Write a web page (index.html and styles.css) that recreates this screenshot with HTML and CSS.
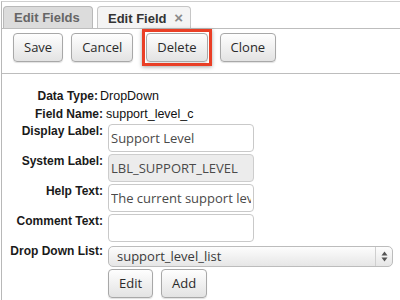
FILE: index.html
```html
<!DOCTYPE html>
<html>
<head>
<meta charset="utf-8">
<link rel="stylesheet" href="styles.css">
</head>
<body>
<div class="page">
  <div class="tabs">
    <div class="tab">Edit Fields</div>
    <div class="tab active">Edit Field <span class="close">×</span></div>
  </div>
  <div class="toolbar">
    <button class="btn">Save</button>
    <button class="btn">Cancel</button>
    <span class="hl"><button class="btn">Delete</button></span>
    <button class="btn">Clone</button>
  </div>
  <div class="form">
    <div class="row text dt"><div class="lbl">Data Type:</div><div class="val">DropDown</div></div>
    <div class="row text fn"><div class="lbl">Field Name:</div><div class="val">support_level_c</div></div>
    <div class="row inp first"><div class="lbl">Display Label:</div><input class="field" type="text" value="Support Level"></div>
    <div class="row inp"><div class="lbl">System Label:</div><input class="field ro" type="text" value="LBL_SUPPORT_LEVEL" readonly></div>
    <div class="row inp"><div class="lbl">Help Text:</div><input class="field" type="text" value="The current support level"></div>
    <div class="row inp"><div class="lbl">Comment Text:</div><input class="field" type="text" value=""></div>
    <div class="row sel"><div class="lbl">Drop Down List:</div>
      <div class="select"><span class="txt">support_level_list</span><span class="arrow"><svg width="7" height="11" viewBox="0 0 7 11"><path d="M3.5 0.5 L6.5 4.5 L0.5 4.5 Z M0.5 6.5 L6.5 6.5 L3.5 10.5 Z" fill="#555"/></svg></span></div>
    </div>
    <div class="row acts"><div></div><div class="btns"><button class="btn">Edit</button><button class="btn">Add</button></div></div>
  </div>
</div>
</body>
</html>
```
FILE: styles.css
```css
html, body {
  margin: 0;
  padding: 0;
  background: #fff;
  width: 400px;
  height: 300px;
  overflow: hidden;
}
.page {
  margin: 1px 0 0 1px;
  border-top: 1px solid #cfcfcf;
  border-left: 1px solid #b8b8b8;
  height: 298px;
  overflow: hidden;
}
.tabs {
  display: flex;
  align-items: flex-end;
  gap: 4px;
  padding: 4px 0 0 1px;
  height: 22px;
  border-bottom: 1px solid #bdbdbd;
}
.tab {
  box-sizing: border-box;
  height: 22px;
  width: 90px;
  padding-left: 10px;
  border: 1px solid #b9b9b9;
  border-bottom: none;
  border-radius: 4px 4px 0 0;
  background: #dcdcdc;
  font: bold 13px/21px "Liberation Sans", Arial, sans-serif;
  color: #666;
  white-space: nowrap;
}
.tab.active {
  width: 94px;
  background: #f4f4f4;
  border-color: #c6c6c6;
  color: #333;
}
.close {
  color: #8a8a8a;
  font-size: 15px;
  margin-left: 4px;
}
.toolbar {
  display: flex;
  align-items: flex-start;
  gap: 8px;
  height: 40px;
  padding: 4px 0 0 11px;
  border-bottom: 1px solid #bdbdbd;
}
.btn {
  box-sizing: border-box;
  height: 29px;
  margin: 0;
  padding: 0 10px;
  border: 1px solid #a8a8a8;
  border-radius: 4px;
  background: linear-gradient(#fefefe, #e3e3e3);
  box-shadow: 0 1px 1px rgba(0,0,0,0.12);
  font: 13px/27px "Open Sans", sans-serif;
  color: #2a2a2a;
}
.hl {
  display: flex;
  margin: -4px 0 -4px 1px;
  padding: 1px 1px 1px 1px;
  border: 3px solid #ea3f26;
  box-shadow: 0 1px 4px rgba(0,0,0,0.35);
}
.form {
  padding-top: 14px;
}
.row {
  display: grid;
  grid-template-columns: 101px 1fr;
  column-gap: 3px;
  align-items: start;
}
.lbl {
  text-align: right;
  font: bold 12px/14px "Liberation Sans", Arial, sans-serif;
  color: #1a1a1a;
  white-space: nowrap;
}
.row.text .lbl { line-height: 17px; }
.val {
  font: 12.5px/17px "Liberation Sans", Arial, sans-serif;
  color: #111;
  white-space: nowrap;
}
.row.dt .lbl { padding-right: 5px; }
.row.dt .val { margin-left: -6px; }
.row.fn { margin-top: 1px; }
.row.inp { margin-top: 2px; }
.row.inp.first { margin-top: 1px; }
.field {
  box-sizing: border-box;
  width: 146px;
  height: 28px;
  margin: 0 0 0 2px;
  padding: 0 2px;
  border: 1px solid #c9c9c9;
  border-radius: 4px;
  background: #fff;
  font: 13px "Open Sans", sans-serif;
  color: #4a4a4a;
  outline: none;
}
.field.ro {
  background: #ececec;
  border-color: #cdcdcd;
}
.row.sel { margin-top: 4px; }
.row.sel .lbl { line-height: 10px; }
.select {
  box-sizing: border-box;
  display: flex;
  width: 285px;
  height: 21px;
  margin-left: 2px;
  border: 1px solid #bcbcbc;
  border-radius: 5px;
  background: linear-gradient(#fdfdfd, #e6e6e6);
  font: 13px/19px "Open Sans", sans-serif;
  color: #3a3a3a;
}
.select .txt {
  flex: 1;
  padding-left: 8px;
}
.select .arrow {
  width: 16px;
  border-left: 1px solid #cfcfcf;
  display: flex;
  align-items: center;
  justify-content: center;
}
.row.acts { margin-top: 2px; }
.btns {
  display: flex;
  gap: 8px;
  margin-left: 2px;
}
```
